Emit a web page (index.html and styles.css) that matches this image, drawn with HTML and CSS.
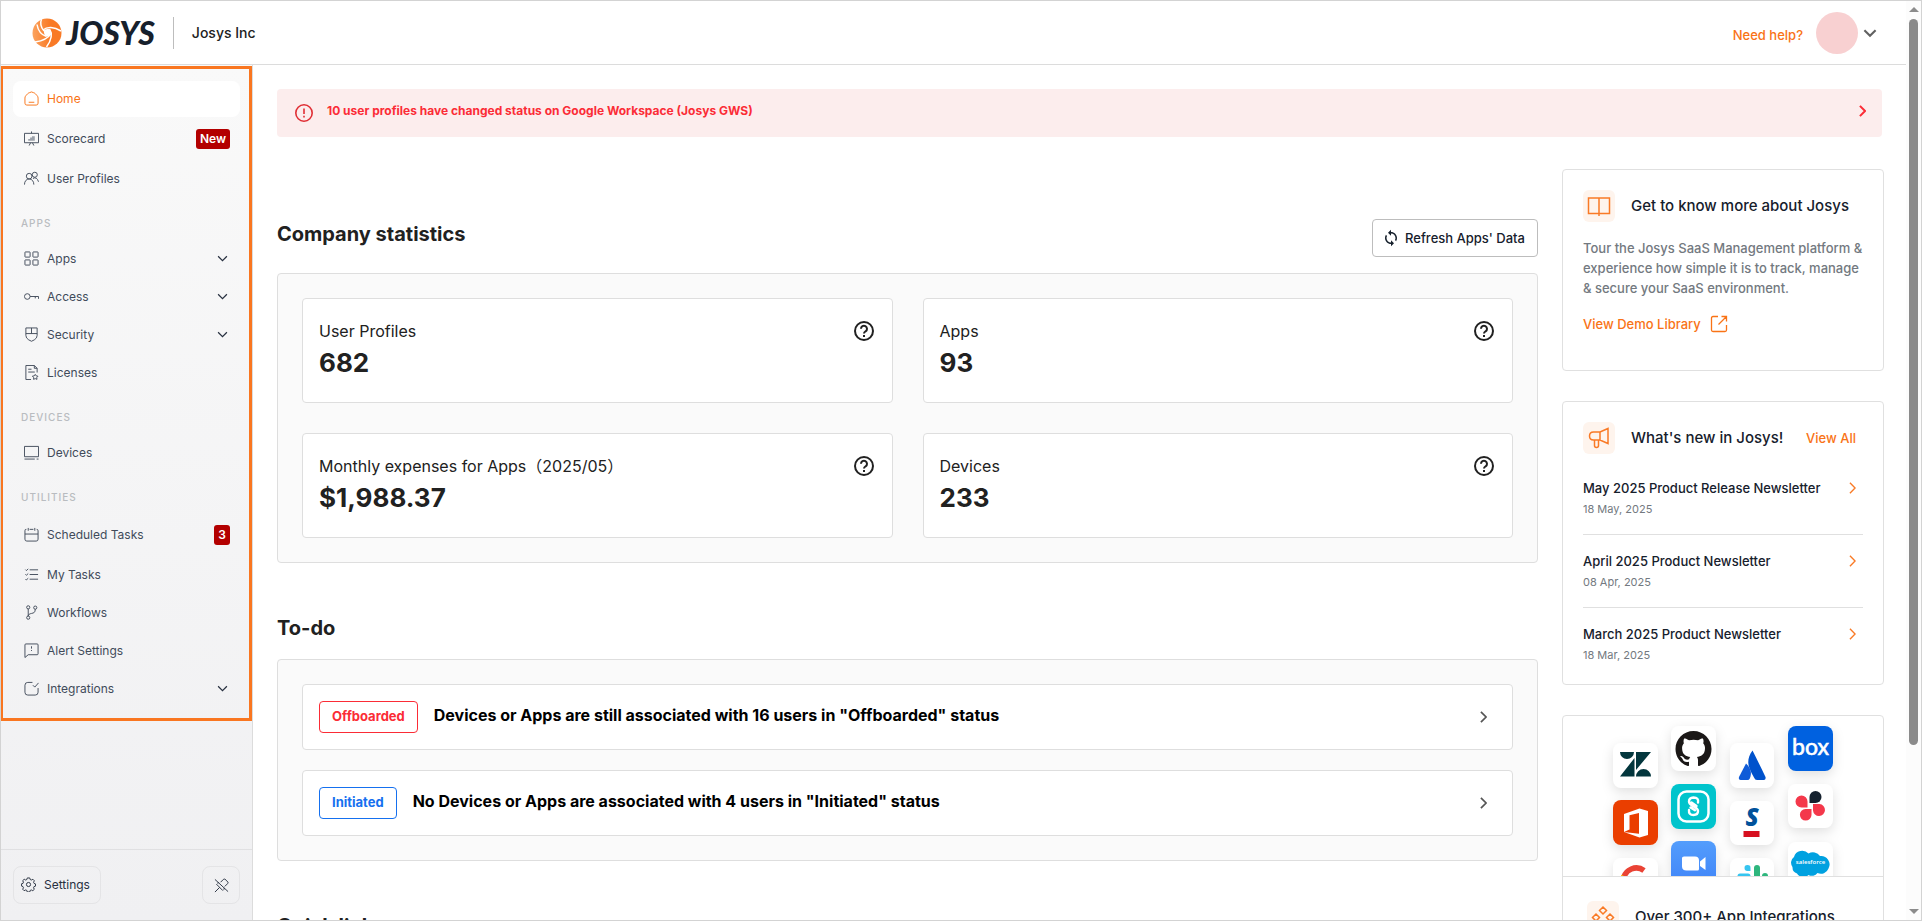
FILE: index.html
```html
<!DOCTYPE html>
<html lang="en">
<head>
<meta charset="utf-8">
<title>Josys</title>
<link rel="stylesheet" href="styles.css">
</head>
<body>
<svg class="sprite" aria-hidden="true">
  <symbol id="chev-down" viewBox="0 0 10 10"><path d="M1 3l4 4 4-4"/></symbol>
  <symbol id="chev-right" viewBox="0 0 8 14"><path d="M1 1l6 6-6 6"/></symbol>
  <symbol id="help" viewBox="0 0 22 22"><circle cx="11" cy="11" r="9"/><path d="M8 8.800a3 3 0 1 1 4.600 2.500c-1 .7-1.600 1.200-1.600 2.200"/><path d="M11 15v2"/></symbol>
</svg>
<div class="window">
  <div class="page">
    <header class="topbar">
      <a class="brand" href="#" aria-label="Josys">
        <svg class="brand-mark" viewBox="0 0 30 30">
          <defs><linearGradient id="og" x1="0" y1="0" x2="1" y2="0"><stop offset="0" stop-color="#fba35f"/><stop offset=".6" stop-color="#f97a26"/></linearGradient></defs>
          <circle cx="15" cy="15" r="14.500" fill="url(#og)"/>
          <g fill="none" stroke="#fff" stroke-width="1.500">
            <path d="M9.500 1c-1.500 4-1 8 2.500 12"/>
            <path d="M11 12c4-3.500 11-3.500 18 1"/>
            <path d="M17.500 11c3 4.500 2 11-3 18"/>
            <path d="M19 15.500c-2.500 4.500-9 7.500-16 8.500"/>
            <path d="M14.500 18.500c-5-1.500-8.500-6-9.500-12"/>
          </g>
          <path d="M12 12.200c2-1.300 3.800-1.500 5.600-.8 1.200 1.600 1.400 3.500.7 5-1.200 1.500-2.300 2.200-4 2.100-1.700-1-2.800-3.500-2.300-6.300z" fill="#fff"/>
        </svg>
        <span class="brand-name">JOSYS</span>
      </a>
      <span class="org">Josys Inc</span>
      <a class="need-help" href="#">Need help?</a>
      <button class="account" aria-label="Account"><span class="avatar"></span><svg class="ic account-chev"><use href="#chev-down"/></svg></button>
    </header>
    <div class="body">
      <aside class="sidebar">
        <nav class="menu">
          <a class="item active" href="#"><svg class="ic" viewBox="0 0 16 16"><path d="M1 7.500q0-1.500 1-2.500l2-2.200q.5-.6 2-1.100L8 1l2 .7q1.500.5 2 1.100L14 5q1 1 1 2.500V13q0 2-2 2H3q-2 0-2-2zM5 12h6"/></svg>Home</a>
          <a class="item badged" href="#"><svg class="ic" viewBox="0 0 16 16"><path d="M.5 2.500h15v10H.5zM8 .5v2M5.500 15.500l1.500-3M10.500 15.500L9 12.500"/><path class="fill" d="M4.500 10.500v-2h2v-1.500h2V5.500h3v5z"/></svg>Scorecard<span class="badge">New</span></a>
          <a class="item" href="#"><svg class="ic" viewBox="0 0 16 16"><circle cx="5.500" cy="5.500" r="3"/><path d="M.5 14.500c0-3.500 2-6 5-6s5 2.500 5 6"/><circle cx="11.500" cy="4" r="2.700"/><path d="M9.500 8q4-2.500 6 3.500"/></svg>User Profiles</a>

          <h3 class="group">APPS</h3>
          <button class="item"><svg class="ic" viewBox="0 0 16 16"><rect x="1" y="1" width="5.500" height="5.500" rx=".5"/><rect x="9.500" y="1" width="5.500" height="5.500" rx=".5"/><rect x="1" y="9.500" width="5.500" height="5.500" rx=".5"/><rect x="9.500" y="9.500" width="5.500" height="5.500" rx=".5"/></svg>Apps<svg class="ic chev"><use href="#chev-down"/></svg></button>
          <button class="item"><svg class="ic" viewBox="0 0 16 16"><circle cx="3.500" cy="8" r="3"/><path d="M6.500 8h9v2.500M12 8v2"/></svg>Access<svg class="ic chev"><use href="#chev-down"/></svg></button>
          <button class="item"><svg class="ic" viewBox="0 0 16 16"><path d="M2 1h12v8q0 3-3 4.700L8 15.200l-3-1.500Q2 12 2 9zM2 7h12M8 1v6"/></svg>Security<svg class="ic chev"><use href="#chev-down"/></svg></button>
          <a class="item" href="#"><svg class="ic" viewBox="0 0 16 16"><path d="M7.500 15.500H2V.5h9l3 3V8M11 .5v3h3M4.500 4.500H8M4.500 7.500h7"/><path d="M12 10l1 1.600 1.900.4-1.300 1.400.2 1.900-1.800-.8-1.800.8.2-1.900L8.900 12l1.900-.4z"/></svg>Licenses</a>

          <h3 class="group">DEVICES</h3>
          <a class="item" href="#"><svg class="ic" viewBox="0 0 16 16"><path d="M.5 1.500h15v11H.5zM.5 15h11M13.500 15h2"/></svg>Devices</a>

          <h3 class="group">UTILITIES</h3>
          <a class="item badged" href="#"><svg class="ic" viewBox="0 0 16 16"><path d="M2.500 2.500H2Q1 2.500 1 4v9q0 2 2 2h10q2 0 2-2V4q0-1.500-1.500-1.500M1 7.500h14M4.500 1v3M11.500 1v3M6 2.500h4"/></svg>Scheduled Tasks<span class="badge">3</span></a>
          <a class="item" href="#"><svg class="ic" viewBox="0 0 16 16"><path d="M6 3h9M6 8h9M6 13h9M1.500 2.800l1 1 2-1.800M1.500 7.800l1 1 2-1.800M1.500 12.800l1 1 2-1.800"/></svg>My Tasks</a>
          <a class="item" href="#"><svg class="ic" viewBox="0 0 16 16"><circle cx="4.500" cy="2.500" r="1.700"/><circle cx="12" cy="2.800" r="1.700"/><circle cx="4.500" cy="13.500" r="1.700"/><path d="M4.500 4.200v7.600M12 4.500c0 3.500-1.500 4-4 4.500-2 .4-3.500 1-3.500 2.800"/></svg>Workflows</a>
          <a class="item" href="#"><svg class="ic" viewBox="0 0 16 16"><path d="M1 15.500V2q0-1 1-1h12q1 0 1 1v9.500q0 1-1 1H4.500zM8 3.500V6M8 7.500v1"/></svg>Alert Settings</a>
          <button class="item"><svg class="ic" viewBox="0 0 16 16"><path d="M9 1.500H4q-3 0-3 3V12q0 3 3 3h8q3 0 3-3V7.500M9.500 4.500l2 2L15.500 2"/></svg>Integrations<svg class="ic chev"><use href="#chev-down"/></svg></button>
        </nav>
        <div class="side-foot">
          <button class="foot-btn"><svg class="ic" viewBox="0 0 16 16"><circle cx="8" cy="8" r="2.200"/><path d="M6.700 1h2.600l.5 1.700 1.300.5 1.600-.8 1.500 1.600-.8 1.600.5 1.200 1.600.6v2.300l-1.700.6-.4 1.200.8 1.600-1.600 1.500-1.600-.8-1.200.5-.5 1.700H6.700l-.5-1.700-1.200-.5-1.700.8-1.500-1.600.8-1.500-.5-1.300L.6 9.700V7.200l1.600-.5.4-1.200-.8-1.600 1.600-1.500 1.500.8 1.300-.5z"/></svg>Settings</button>
          <button class="foot-btn icon-only" aria-label="Unpin menu"><svg class="ic" viewBox="0 0 16 16"><path d="M1 1.500l14 13M1 15l5-5M2.500 6.500l7 7M3.500 5.500L5 5M10.500 12.500l.5-2M7 4.500l3-3 1.500-.5L15 4.500 14.500 6l-3 3"/></svg></button>
        </div>
      </aside>

      <main class="main">
        <a class="alert" href="#">
          <svg class="ic alert-ic" viewBox="0 0 18 18"><circle cx="9" cy="9" r="8.200"/><path d="M9 4.500v5.500M9 11.800v1.700"/></svg>
          <span>10 user profiles have changed status on Google Workspace (Josys GWS)</span>
          <svg class="ic alert-chev"><use href="#chev-right"/></svg>
        </a>
        <div class="columns">
          <div class="col-main">
            <div class="section-head">
              <h2>Company statistics</h2>
              <button class="refresh"><svg viewBox="0 0 24 24"><path d="M12 4V1L8 5l4 4V6c3.300 0 6 2.700 6 6 0 1-.25 2-.7 2.800l1.460 1.460A7.930 7.930 0 0 0 20 12c0-4.420-3.580-8-8-8zm0 14c-3.300 0-6-2.700-6-6 0-1 .25-2 .7-2.800L5.240 7.740A7.930 7.930 0 0 0 4 12c0 4.420 3.580 8 8 8v3l4-4-4-4v3z"/></svg>Refresh Apps' Data</button>
            </div>
            <section class="panel stats">
              <div class="stat"><p>User Profiles</p><strong>682</strong><svg class="ic q"><use href="#help"/></svg></div>
              <div class="stat"><p>Apps</p><strong>93</strong><svg class="ic q"><use href="#help"/></svg></div>
              <div class="stat"><p>Monthly expenses for Apps（2025/05）</p><strong>$1,988.37</strong><svg class="ic q"><use href="#help"/></svg></div>
              <div class="stat"><p>Devices</p><strong>233</strong><svg class="ic q"><use href="#help"/></svg></div>
            </section>
            <h2 class="solo">To-do</h2>
            <section class="panel todos">
              <a class="todo" href="#"><span class="tag red">Offboarded</span><span class="todo-text">Devices or Apps are still associated with 16 users in "Offboarded" status</span><svg class="ic todo-chev"><use href="#chev-right"/></svg></a>
              <a class="todo" href="#"><span class="tag blue">Initiated</span><span class="todo-text">No Devices or Apps are associated with 4 users in "Initiated" status</span><svg class="ic todo-chev"><use href="#chev-right"/></svg></a>
            </section>
            <h2 class="solo">Quick links</h2>
          </div>

          <div class="col-side">
            <section class="card know">
              <div class="card-head"><span class="tile"><svg class="ic" viewBox="0 0 24 24"><path d="M12 4H1.500v15.500h21V4zM12 4v18"/></svg></span><h3>Get to know more about Josys</h3></div>
              <p class="blurb">Tour the Josys SaaS Management platform &amp; experience how simple it is to track, manage &amp; secure your SaaS environment.</p>
              <a class="demo" href="#">View Demo Library<svg class="ic" viewBox="0 0 18 18"><path d="M8 1.500H3Q1.500 1.500 1.500 3v12q0 1.500 1.500 1.500h12q1.500 0 1.500-1.500v-5M11.500 1.500h5v5M16 2l-7.500 7.500"/></svg></a>
            </section>
            <section class="card news">
              <div class="card-head"><span class="tile"><svg class="ic" viewBox="0 0 24 24"><path d="M13 6H6.500Q2.500 6 2.500 10t4 4H13l8 3.500V2.500zM13 6v8M7.500 14v5.500q0 2 2 2t2-2V14"/></svg></span><h3>What's new in Josys!</h3><a class="view-all" href="#">View All</a></div>
              <ul class="news-list">
                <li><a href="#"><b>May 2025 Product Release Newsletter</b><svg class="ic news-chev"><use href="#chev-right"/></svg><small>18 May, 2025</small></a></li>
                <li><a href="#"><b>April 2025 Product Newsletter</b><svg class="ic news-chev"><use href="#chev-right"/></svg><small>08 Apr, 2025</small></a></li>
                <li><a href="#"><b>March 2025 Product Newsletter</b><svg class="ic news-chev"><use href="#chev-right"/></svg><small>18 Mar, 2025</small></a></li>
              </ul>
            </section>
            <section class="card integrations">
              <svg class="apps-art" viewBox="0 0 320 160" role="img" aria-label="App logos">
                <defs>
                  <linearGradient id="zm" x1="0" y1="0" x2="0" y2="1"><stop offset="0" stop-color="#539dfc"/><stop offset="1" stop-color="#4084f8"/></linearGradient>
                </defs>
                <g class="app-tiles">
                  <rect x="50" y="27" width="45" height="45" rx="8" fill="#fff"/>
                  <rect x="108" y="10" width="45" height="45" rx="8" fill="#fff"/>
                  <rect x="167" y="27" width="44" height="45" rx="8" fill="#fff"/>
                  <rect x="225" y="10" width="45" height="45" rx="8" fill="#0061e0"/>
                  <rect x="50" y="84" width="45" height="45" rx="8" fill="#ea3e00"/>
                  <rect x="108" y="68" width="45" height="45" rx="8" fill="#00c4cc"/>
                  <rect x="167" y="85" width="44" height="44" rx="8" fill="#fff"/>
                  <rect x="225" y="68" width="45" height="44" rx="8" fill="#fff"/>
                  <rect x="50" y="142" width="45" height="45" rx="8" fill="#fff"/>
                  <rect x="108" y="125" width="45" height="45" rx="8" fill="url(#zm)"/>
                  <rect x="167" y="142" width="44" height="45" rx="8" fill="#fff"/>
                  <rect x="225" y="126" width="45" height="45" rx="8" fill="#fff"/>
                </g>
                <path fill="#03363d" d="M57 36h14a7 7 0 0 1-14 0zM73 36h15L73 54zM71.500 42v18.500H57zM73 60.500a7.200 7.200 0 0 1 15 0z"/>
                <g transform="translate(112.500 15) scale(2.250)"><path fill="#1b1817" d="M8 0C3.580 0 0 3.580 0 8c0 3.540 2.290 6.530 5.470 7.590.4.070.55-.17.55-.38 0-.19-.01-.82-.01-1.490-2.010.37-2.530-.49-2.690-.94-.09-.23-.48-.94-.82-1.130-.28-.15-.68-.52-.01-.53.63-.01 1.080.58 1.230.82.720 1.210 1.870.87 2.330.66.070-.52.28-.87.51-1.070-1.780-.2-3.640-.89-3.640-3.950 0-.87.31-1.590.82-2.150-.08-.2-.36-1.020.08-2.120 0 0 .67-.21 2.200.82.640-.18 1.320-.27 2-.27s1.360.09 2 .27c1.530-1.040 2.200-.82 2.200-.82.440 1.100.160 1.920.080 2.120.510.560.820 1.270.820 2.150 0 3.070-1.870 3.750-3.650 3.950.290.250.540.730.540 1.480 0 1.070-.01 1.930-.01 2.200 0 .21.150.460.550.380A8.010 8.010 0 0 0 16 8c0-4.420-3.580-8-8-8z"/></g>
                <path fill="#0052cc" d="M189.500 34.500c4 8 8.500 17 13 26.500q.6 2-1.300 3h-7.200q-2 0-3-2.500c-4.500-8.500-9.500-16-1.500-27z"/>
                <path fill="#0f5bd8" d="M183 47.500c5 4.500 6 9.500 3.800 15q-.6 1.500-2.300 1.500h-6.800q-2.500-.5-1.700-3z"/>
                <text class="box-word" x="247.500" y="39" text-anchor="middle">box</text>
                <path fill="#fff" fill-rule="evenodd" d="M61 98l15.500-5.500 8.500 2.500v24l-8.500 2.500L61 116l15 1.800V97l-9.500 2.300v14.200L61 116z"/>
                <rect x="115.500" y="75.500" width="30" height="30" rx="8" fill="none" stroke="#fff" stroke-width="2.500"/>
                <path fill="none" stroke="#fff" stroke-width="2.400" stroke-linecap="round" d="M135 86.500q1-5-4.500-5-4.500.2-4.500 4c0 2.500 2 3.500 4.500 5s4.500 2 4.500 4.500q0 4-4.500 4-5 0-4.500-5M128.500 86.500l5 3.500M127.500 91.500l4.500 2.700"/>
                <text class="s-word" x="189" y="110" text-anchor="middle">S</text>
                <rect x="180.500" y="115" width="16" height="6" fill="#d7101f"/>
                <path fill="#16222f" d="M252.500 87h-6v-6a6 6 0 1 1 6 6z"/>
                <path fill="#f4384b" d="M244.500 91.500h-6a6 6 0 1 1 6-6zM250 88h6.500a6 6 0 1 1-6.500 6.500zM248.500 93v6a5.800 5.800 0 1 1-6-6z"/>
                <path fill="none" stroke="#ea4335" stroke-width="5.500" d="M60.500 163a13 13 0 0 1 20.500-8.500"/>
                <path fill="none" stroke="#fbbc05" stroke-width="5.500" d="M59.500 169q-.5-5 1.500-9"/>
                <path fill="#fff" d="M121 140.500h11q4 0 4 4v8.500q0 1.500-1.500 1.500h-11q-4.500 0-4.500-4v-8.500q0-1.500 2-1.500zM137 145.500l5.500-4.500v13l-5.500-4z"/>
                <rect x="174.500" y="157.500" width="13" height="5.500" rx="2.500" fill="#36c5f0"/>
                <path fill="#36c5f0" d="M187.500 155H185a3 3 0 1 1 2.500-2.700z"/>
                <rect x="191" y="149" width="6" height="14" rx="3" fill="#2eb67d"/>
                <path fill="#2eb67d" d="M199 163v-3a3 3 0 1 1 6 0v3z"/>
                <path fill="#00a1e0" d="M229.500 151a7 7 0 0 1 1.500-10 8.500 8.500 0 0 1 14.500-3.500 8.500 8.500 0 0 1 11.500 2.500 8.500 8.500 0 0 1 8.500 12.500 8 8 0 0 1-11 4.500 7 7 0 0 1-9 2 7.500 7.500 0 0 1-11.500-1.500 6.500 6.500 0 0 1-4.500-6.500z"/>
                <text class="sf-word" x="247.500" y="148" text-anchor="middle">salesforce</text>
              </svg>
              <div class="int-body"><div class="card-head"><span class="tile"><svg class="ic" viewBox="0 0 24 24"><path d="M12 2l3.500 3.500L12 9 8.500 5.500zM5 9l3.500 3.500L5 16l-3.500-3.500zM19 9l3.500 3.500L19 16l-3.500-3.500zM12 16l3.500 3.500L12 23l-3.500-3.500z"/></svg></span><h3>Over 300+ App Integrations</h3></div></div>
            </section>
          </div>
        </div>
      </main>
    </div>
  </div>
  <div class="scrollbar" aria-hidden="true"><i class="up"></i><i class="thumb"></i><i class="down"></i></div>
</div>
</body>
</html>
```
FILE: styles.css
```css
* { box-sizing: border-box; }
body { margin: 0; font-family: Inter, "Noto Sans CJK JP", sans-serif; color: #212121; background: #fff; }
a { color: inherit; text-decoration: none; }
button { font: inherit; color: inherit; background: none; border: 0; padding: 0; cursor: pointer; }
h2, h3, p, ul { margin: 0; padding: 0; }
.sprite { position: absolute; width: 0; height: 0; }
.ic { fill: none; stroke: currentColor; flex: none; display: block; }

.window { display: flex; height: 100vh; border: 1px solid #d3d3d3; overflow: hidden; }
.page { flex: 1; min-width: 0; display: flex; flex-direction: column; }
.scrollbar { width: 15px; background: #fcfcfc; display: flex; flex-direction: column; align-items: center; padding: 6px 0; flex: none; }
.up, .down { border: 5px solid transparent; height: 0; }
.up { border-top: 0; border-bottom-color: #8b8b8b; margin-bottom: 7px; }
.down { border-bottom: 0; border-top-color: #8b8b8b; margin-top: auto; }
.thumb { width: 9px; height: 80%; border-radius: 5px; background: #8b8b8b; }

.topbar { flex: none; height: 64px; border-bottom: 1px solid #dcdcdc; display: flex; align-items: center; padding: 0 29px 0 31px; }
.brand { display: flex; align-items: center; gap: 4px; height: 32px; padding-right: 18px; border-right: 1px solid #bdbdbd; }
.brand-mark { width: 30px; height: 30px; }
.brand-name { font: italic 900 32px/32px Lato, sans-serif; color: #16202c; }
.org { margin-left: 18px; font-size: 14px; font-weight: 500; }
.need-help { margin-left: auto; font-size: 13px; font-weight: 500; color: #f97316; padding-top: 4px; }
.account { display: flex; align-items: center; gap: 5px; margin-left: 13px; color: #616161; }
.avatar { width: 42px; height: 42px; border-radius: 50%; background: #f8d0d1; }
.account-chev { width: 14px; height: 14px; stroke-width: 1.5; }

.body { flex: 1; display: flex; min-height: 0; }
.sidebar { position: relative; width: 252px; flex: none; border-right: 1px solid #dcdcdc; background: linear-gradient(#f9f9f9, #f0f0f2); display: flex; flex-direction: column; justify-content: space-between; }
.menu { position: relative; padding: 16px 12px 14px; display: flex; flex-direction: column; gap: 2px; }
.menu::after { content: ""; position: absolute; inset: 1px 0 0 -1px; border: 3px solid #f97620; pointer-events: none; }
.item { display: flex; align-items: center; gap: 8px; height: 36px; padding: 0 10px 1px 11px; border-radius: 8px; font-size: 12px; color: #414b5a; text-align: left; }
.item .ic { width: 15px; height: 15px; }
.item.badged { height: 40px; }
.item.active { background: #fff; color: #f97316; }
.item .chev { width: 11px; height: 11px; margin-left: auto; margin-right: 2px; stroke: #27303f; stroke-width: 1.1; }
.fill { fill: #9aa0a9; stroke: none; }
.badge { margin-left: auto; height: 20px; line-height: 20px; padding: 0 4px; border-radius: 3px; background: #b30000; color: #fff; font-weight: 600; }
.group { height: 40px; line-height: 14px; padding: 17px 8px 0; font-size: 10px; font-weight: 500; letter-spacing: 1px; color: #b9bcc0; }

.side-foot { height: 71px; border-top: 1px solid #e0e0e2; display: flex; justify-content: space-between; align-items: flex-start; padding: 16px 12px 0; }
.foot-btn { display: flex; align-items: center; gap: 8px; height: 38px; padding: 0 10px 1px 7px; border: 1px solid #e4e4e6; border-radius: 8px; font-size: 12px; color: #27303f; }
.foot-btn .ic { width: 15px; height: 15px; }
.foot-btn.icon-only { width: 38px; padding: 0; justify-content: center; }

.main { flex: 1; min-width: 0; padding: 24px 22px 0 24px; overflow: hidden; }
.alert { display: flex; height: 48px; margin-right: 2px; padding: 0 16px 0 18px; border-radius: 4px; background: #fceded; color: #fb2c36; font-size: 12px; font-weight: 700; line-height: 44px; }
.alert-ic { width: 18px; height: 18px; margin: 15px 14px 0 0; stroke: #e02f35; stroke-width: 1.6; }
.alert-chev { width: 7px; height: 12px; margin: 16px 0 0 auto; stroke-width: 2.4; overflow: visible; }

.columns { display: flex; gap: 24px; align-items: flex-start; margin-top: 32px; }
.col-main { flex: 1; min-width: 0; padding-top: 50px; }
.section-head { display: flex; justify-content: space-between; height: 38px; margin-bottom: 16px; }
h2 { font-size: 20px; font-weight: 700; line-height: 30px; }
.solo { margin: 50px 0 16px; }
.refresh { display: flex; align-items: center; gap: 5px; border: 1px solid #bdbdbd; border-radius: 4px; padding: 0 12px 0 9px; font-size: 13px; font-weight: 500; color: #16202c; }
.refresh svg { width: 18px; height: 18px; fill: #16202c; }
.panel { border: 1px solid #dedede; border-radius: 4px; background: #fafafa; padding: 24px; }
.stats { display: grid; grid-template-columns: 1fr 1fr; gap: 30px; }
.stat { display: grid; grid-template-columns: 1fr auto; align-content: start; height: 105px; padding: 19px 17px 0 16px; border: 1px solid #dedede; border-radius: 4px; background: #fff; }
.stat p { font-size: 16px; line-height: 26px; }
.stat strong { grid-row: 2; font-size: 26px; font-weight: 700; line-height: 38px; }
.q { width: 22px; height: 22px; margin-top: 2px; stroke-width: 2; }

.todos { display: flex; flex-direction: column; gap: 20px; }
.todo { display: flex; align-items: center; height: 66px; padding: 0 25px 0 16px; border: 1px solid #dedede; border-radius: 4px; background: #fff; }
.tag { height: 32px; line-height: 29px; padding: 0 12px; border: 1px solid; border-radius: 4px; font-size: 13px; font-weight: 700; }
.red { color: #fb2c36; }
.blue { color: #1570ef; }
.todo-text { margin-left: 16px; padding-bottom: 4px; font-size: 16px; font-weight: 700; color: #000; }
.todo-chev { width: 7px; height: 12px; margin-left: auto; stroke: #555; stroke-width: 2; overflow: visible; }

.col-side { width: 322px; flex: none; display: flex; flex-direction: column; gap: 30px; }
.card { border: 1px solid #e0e0e0; border-radius: 4px; background: #fff; padding: 20px; }
.card-head { display: flex; align-items: center; }
.card-head h3 { margin-left: 16px; padding-bottom: 1px; font-size: 15px; font-weight: 500; color: #16202c; white-space: nowrap; }
.tile { width: 32px; height: 32px; border-radius: 6px; background: #fef4ed; color: #f97a26; display: grid; place-items: center; flex: none; }
.tile .ic { width: 24px; height: 24px; stroke-width: 1.5; }
.know { height: 202px; }
.blurb { margin-top: 16px; font-size: 13px; line-height: 20px; font-weight: 500; color: #737980; }
.demo { display: flex; align-items: center; gap: 9px; margin-top: 17px; font-size: 13px; font-weight: 500; color: #f97316; }
.demo .ic { width: 18px; height: 18px; stroke-width: 1.3; }
.news { height: 284px; }
.view-all { margin-left: auto; padding-right: 7px; font-size: 13px; font-weight: 500; color: #f97316; }
.news-list { list-style: none; margin-top: 8px; }
.news-list li { height: 73px; border-bottom: 1px solid #e0e0e0; }
.news-list li:last-child { border: 0; }
.news-list a { display: grid; grid-template-columns: 1fr auto; align-items: center; padding: 16px 7px 0 0; }
.news-list b { font-size: 13px; font-weight: 500; line-height: 20px; color: #16202c; }
.news-list small { font-size: 11px; line-height: 23px; color: #737980; }
.news-chev { width: 7px; height: 12px; stroke: #f97a26; stroke-width: 1.6; overflow: visible; }
.integrations { padding: 0; }
.apps-art { display: block; width: 100%; }
.app-tiles { filter: drop-shadow(0 4px 6px rgba(0, 0, 0, .12)); }
.box-word { font: 400 23px Lato, sans-serif; fill: #fff; stroke: #fff; stroke-width: .6; }
.s-word { font: italic 900 24px "Open Sans", sans-serif; fill: #00529b; }
.sf-word { font: 600 6px "Open Sans", sans-serif; fill: #fff; }
.int-body { border-top: 1px solid #e0e0e0; padding: 24px; }
```
